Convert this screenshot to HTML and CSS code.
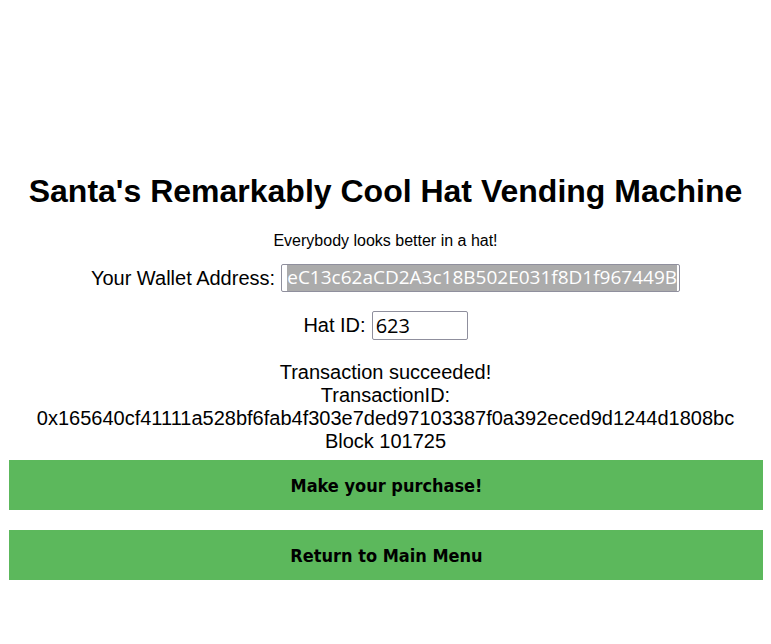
FILE: index.html
```html
<!DOCTYPE html>
<html>
<head>
<meta charset="utf-8">
<title>Santa's Remarkably Cool Hat Vending Machine</title>
<link rel="stylesheet" href="styles.css">
</head>
<body>
<div class="page">
  <h1 class="title">Santa's Remarkably Cool Hat Vending Machine</h1>
  <p class="subtitle">Everybody looks better in a hat!</p>
  <div class="field-row">
    <label class="label">Your Wallet Address:</label>
    <div class="input wallet-input"><span class="selected">eC13c62aCD2A3c18B502E031f8D1f967449B</span></div>
  </div>
  <div class="field-row">
    <label class="label">Hat ID:</label>
    <div class="input hat-input">623</div>
  </div>
  <div class="result">
    <div>Transaction succeeded!</div>
    <div>TransactionID:</div>
    <div>0x165640cf41111a528bf6fab4f303e7ded97103387f0a392eced9d1244d1808bc</div>
    <div>Block 101725</div>
  </div>
  <div class="buttons">
    <button class="btn">Make your purchase!</button>
    <button class="btn">Return to Main Menu</button>
  </div>
</div>
</body>
</html>
```

FILE: styles.css
```css
html, body {
  background: #ffffff;
}
body {
  margin: 8px;
  font-family: "Liberation Sans", Arial, sans-serif;
  color: #000;
}
.page {
  display: flex;
  flex-direction: column;
  align-items: center;
  padding-top: 165px;
  text-align: center;
}
.title {
  font-size: 32px;
  font-weight: bold;
  line-height: 37px;
  margin: 0;
}
.subtitle {
  font-size: 16px;
  line-height: 18px;
  margin: 22px 0 0 0;
}
.field-row {
  display: flex;
  align-items: center;
  justify-content: center;
  gap: 6px;
  font-size: 20px;
  margin-top: 14px;
}
.field-row + .field-row {
  margin-top: 19px;
}
.label {
  font-size: 20px;
}
.input {
  box-sizing: border-box;
  border: 1px solid #8f8f9d;
  border-radius: 2px;
  background: #fff;
  font-family: "Open Sans", "Noto Sans", sans-serif;
  font-size: 19px;
  line-height: 25px;
  text-align: left;
  overflow: hidden;
  white-space: nowrap;
}
.wallet-input {
  width: 399px;
  height: 28px;
  padding: 0 2px 0 2px;
  display: flex;
  justify-content: flex-end;
}
.selected {
  background: #ababab;
  color: #ffffff;
}
.hat-input {
  width: 96px;
  height: 29px;
  padding: 1px 3px;
  font-size: 20px;
}
.result {
  font-size: 20px;
  line-height: 23px;
  margin-top: 21px;
}
.buttons {
  align-self: stretch;
  display: flex;
  flex-direction: column;
  gap: 20px;
  margin-top: 7px;
  margin-right: -1px;
  padding-left: 1px;
}
.btn {
  height: 50px;
  border: none;
  background: #5cb85c;
  color: #000;
  font-family: "DejaVu Sans Condensed", "DejaVu Sans", Verdana, sans-serif;
  font-stretch: condensed;
  font-weight: bold;
  font-size: 18px;
  cursor: pointer;
}
```
